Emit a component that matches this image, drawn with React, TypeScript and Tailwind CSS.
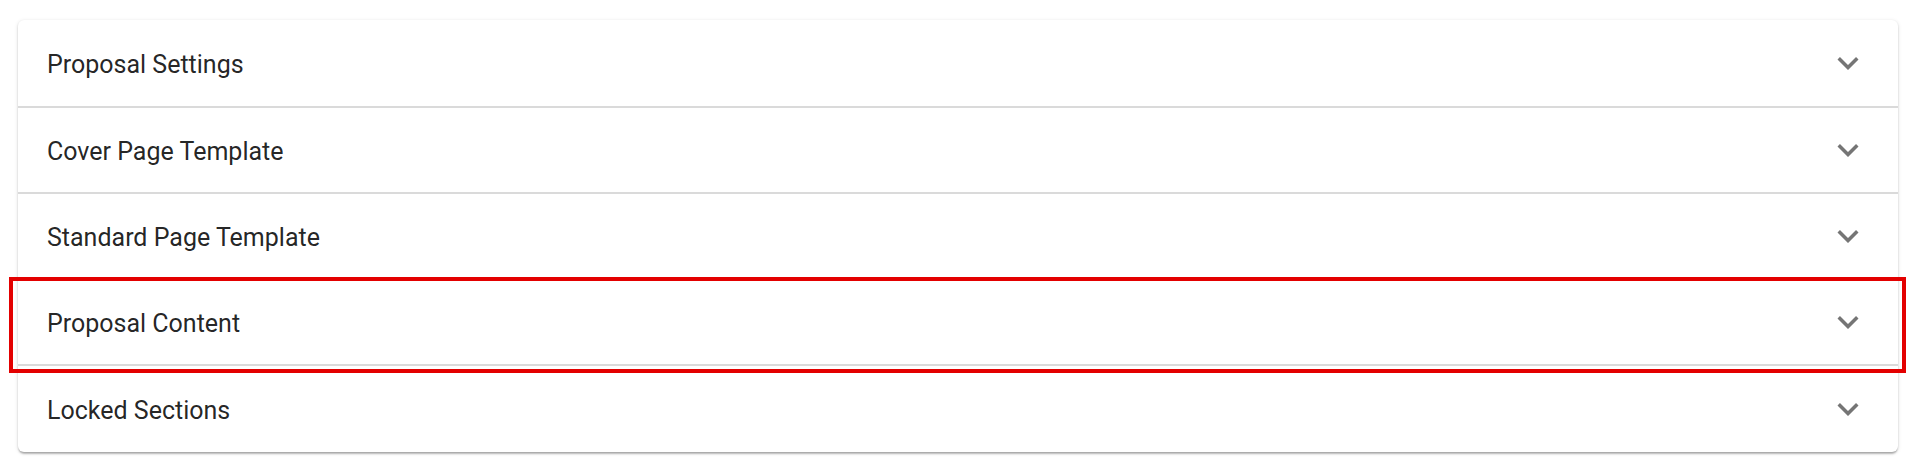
const sections = [
  "Proposal Settings",
  "Cover Page Template",
  "Standard Page Template",
  "Proposal Content",
  "Locked Sections",
];

function ExpandMore() {
  return (
    <svg viewBox="0 0 24 24" className="h-[42px] w-[42px] fill-[#757575]">
      <path d="M16.59 8.59 12 13.17 7.41 8.59 6 10l6 6 6-6z" />
    </svg>
  );
}

export default function App() {
  return (
    <div className="h-[460px] w-full bg-white pl-[18px] pr-[16px] pt-[20px] font-['Roboto',sans-serif]">
      <div className="rounded-[6px] bg-white shadow-[0_3px_2px_-1px_rgba(0,0,0,0.2),0_1px_2px_0_rgba(0,0,0,0.14),0_1px_4px_0_rgba(0,0,0,0.12)]">
        {sections.map((title, i) => (
          <div
            key={title}
            className={`relative flex items-center justify-between pl-[29px] pr-[29px] ${
              i > 0 ? "border-t-2 border-[#dadada]" : ""
            } ${i === sections.length - 1 ? "h-[88px]" : "h-[86px]"}`}
          >
            <span className="pt-[3px] text-[25px] leading-none text-black/[0.87]">{title}</span>
            <ExpandMore />
            {title === "Proposal Content" && (
              <div className="pointer-events-none absolute -bottom-[9px] -left-[9px] -right-[8px] -top-[3px] z-10 border-[4px] border-[#e30000]" />
            )}
          </div>
        ))}
      </div>
    </div>
  );
}
